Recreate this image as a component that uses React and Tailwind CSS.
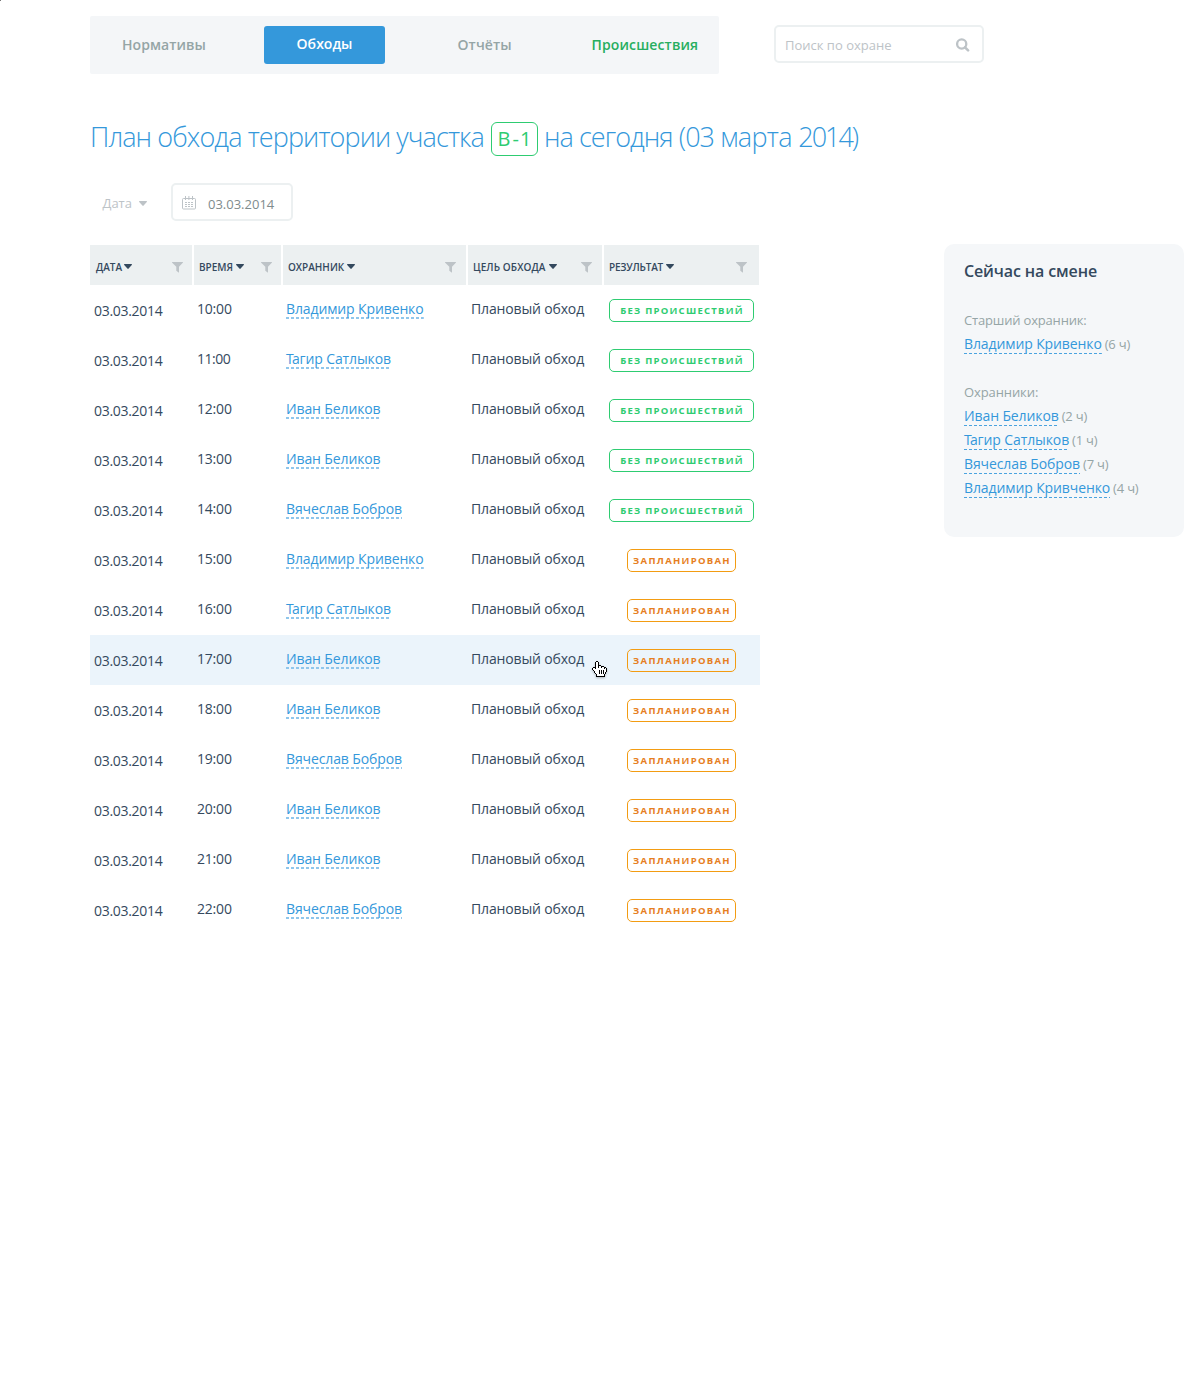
import React from "react";

const rows = [
  ["10:00", "Владимир Кривенко", true],
  ["11:00", "Тагир Сатлыков", true],
  ["12:00", "Иван Беликов", true],
  ["13:00", "Иван Беликов", true],
  ["14:00", "Вячеслав Бобров", true],
  ["15:00", "Владимир Кривенко", false],
  ["16:00", "Тагир Сатлыков", false],
  ["17:00", "Иван Беликов", false],
  ["18:00", "Иван Беликов", false],
  ["19:00", "Вячеслав Бобров", false],
  ["20:00", "Иван Беликов", false],
  ["21:00", "Иван Беликов", false],
  ["22:00", "Вячеслав Бобров", false],
];

const columns = [
  { label: "Дата", pad: "pl-[6px] pr-[9px]", gap: "ml-0.5" },
  { label: "Время", pad: "pl-[5px] pr-[9.5px]", gap: "ml-[3px]" },
  { label: "Охранник", pad: "pl-[5px] pr-[10.5px]", gap: "ml-[3px]" },
  { label: "Цель обхода", pad: "pl-[5px] pr-[10.5px] tracking-[0.1px]", gap: "ml-[3px]" },
  { label: "Результат", pad: "pl-[5px] pr-[12.5px] mr-px tracking-[-0.2px]", gap: "ml-[3px]" },
];

const onDuty = [
  ["Иван Беликов", 2],
  ["Тагир Сатлыков", 1],
  ["Вячеслав Бобров", 7],
  ["Владимир Кривченко", 4],
];

/* "X" is outline, "o" is fill. */
const HAND = [
  "....XX.........",
  "...XooX........",
  "...XooX........",
  "...XooX........",
  "...XooXXX......",
  "...XooXooXXX...",
  ".XXXooXooXooXX.",
  "XooXooooooooXoX",
  "XoooooooooooooX",
  ".XoooooXoXoXooX",
  "..XooooXoXoXooX",
  "..XooooXoXoXoX.",
  "...XoooXoXoXoX.",
  "....XoooooooX..",
  "....XoooooooX..",
  "....XXXXXXXXX..",
];

const GRID = "grid grid-cols-[102px_87px_183px_134px_156px] gap-x-0.5";

function Caret({ className }) {
  return (
    <svg width="8" height="5" viewBox="0 0 8 5" className={className} fill="currentColor">
      <path d="M.5 0h7c.5 0 .6.5.3.9L4.600 4.600c-.3.4-.8.4-1.200 0L.2.900C-.1.500 0 0 .5 0z" />
    </svg>
  );
}

function Funnel() {
  return (
    <svg width="11" height="11" viewBox="0 0 11 11" className="ml-auto mt-px text-[#bdc3c7]" fill="currentColor">
      <path d="M.4 0h10.200c.4 0 .5.5.2.800L7 4.700v6.100L4.300 8.700v-4L.2.800C-.1.500 0 0 .4 0z" />
    </svg>
  );
}

function CalendarIcon() {
  return (
    <svg width="14" height="14" viewBox="0 0 14 14" className="mt-px text-[#bdc3c7]" fill="none" stroke="currentColor">
      <rect x=".5" y="2.500" width="13" height="10.500" rx="1" />
      <path d="M3.500 0v4M6.900 0v4M10.500 0v4" />
      <path d="M3 6.500h8M3 8.500h8M3 10.500h8" strokeDasharray="2 1" />
    </svg>
  );
}

function SearchIcon() {
  return (
    <svg width="14" height="14" viewBox="0 0 14 14" className="mt-px text-[#bdc3c7]" fill="none" stroke="currentColor">
      <circle cx="5.700" cy="6" r="4.600" strokeWidth="2.300" />
      <path d="M9 9.300l3.100 3.100" strokeWidth="2.500" strokeLinecap="round" />
    </svg>
  );
}

function HandCursor() {
  return (
    <svg width="15" height="16" viewBox="0 0 15 16" className="absolute left-[502px] top-[416px] drop-shadow-[0_1px_1px_rgba(0,0,0,0.25)]" shapeRendering="crispEdges">
      {HAND.flatMap((line, y) =>
        [...line].map((c, x) =>
          c === "." ? null : <rect key={`${x}-${y}`} x={x} y={y} width="1" height="1" fill={c === "X" ? "#000" : "#fff"} />
        )
      )}
    </svg>
  );
}

/* Pulls the vowel under the crossbar of a leading "Т". */
function Name({ children }) {
  if (!children.startsWith("Та")) return children;
  return (
    <>
      <span className="tracking-[-1.8px]">Т</span>
      {children.slice(1)}
    </>
  );
}

function RowLink({ children }) {
  return (
    <a className="h-[19px] bg-[repeating-linear-gradient(90deg,#8fc6ec_0_3px,transparent_3px_5px)] bg-[length:100%_2px] bg-bottom bg-no-repeat text-[14px] leading-[18px] tracking-[-0.12px] text-[#3498db]">
      <Name>{children}</Name>
    </a>
  );
}

function DutyLine({ name, hours }) {
  return (
    <div className="flex h-6 items-start gap-[3px] whitespace-nowrap">
      <a className="h-5 bg-[repeating-linear-gradient(90deg,#4aa3df_0_3px,transparent_3px_5px)] bg-[length:100%_1px] bg-bottom bg-no-repeat text-[14px] leading-[19px] tracking-[-0.11px] text-[#3498db]">
        <Name>{name}</Name>
      </a>
      <span className="text-[13px] leading-5 tracking-[-0.2px] text-[#95a5a6]">({hours} ч)</span>
    </div>
  );
}

export default function App() {
  return (
    <div className="relative min-h-[1400px] w-[1200px] bg-white pl-[90px] pt-4 text-[#34495e] [font-family:'Open_Sans',sans-serif]">
      <span className="absolute left-0 top-0 size-px bg-[#777]" />
      <header className="flex items-start">
        <nav className="flex h-[58px] w-[629px] items-start rounded-[2px] bg-[#f4f6f8] pt-[10px] text-[14px] font-semibold leading-[38px] text-[#95a5a6]">
          <a className="w-[174px] pl-8 tracking-[0.05px]">Нормативы</a>
          <a className="h-[38px] w-[121px] rounded-[3px] bg-[#3498db] text-center leading-9 text-white">Обходы</a>
          <a className="w-[206px] pl-[72.5px] tracking-[0.1px]">Отчёты</a>
          <a className="pl-[0.5px] tracking-[0.13px] text-[#27ae60]">Происшествия</a>
        </nav>
        <div className="ml-[55px] mt-[9px] flex h-[38px] w-[210px] items-center justify-between rounded-[5px] border-2 border-[#ecf0f1] pl-[9px] pr-[12px]">
          <span className="pt-0.5 text-[13px] leading-5 text-[#bdc3c7]">Поиск по охране</span>
          <SearchIcon />
        </div>
      </header>

      <h1 className="mt-[44px] flex h-[38px] whitespace-nowrap text-[27px] font-light leading-[38px] text-[#3498db]">
        <span className="w-[394px] tracking-[-0.9px]">План обхода территории участка</span>
        <span className="ml-[7px] mr-[6px] mt-[4px] h-[34px] w-[47px] rounded-[6px] border border-[#2ecc71] pl-px text-center text-[20px] font-normal leading-8 tracking-[1px] text-[#2ecc71]">
          <span className="tracking-[2px]">В</span>-1
        </span>
        <span className="tracking-[-0.95px]">
          на сегодня (03 <span className="tracking-[-0.65px]">марта </span>
          <span className="tracking-[-2px]">2014)</span>
        </span>
      </h1>

      <div className="mt-[27px] flex h-[38px] items-center pl-[12.5px] text-[13px]">
        <span className="pt-0.5 leading-5 text-[#bdc3c7]">Дата</span>
        <Caret className="ml-[7.5px] mt-[3px] text-[#bdc3c7]" />
        <div className="ml-[23.5px] flex h-[38px] w-[122px] items-center rounded-[5px] border-2 border-[#ecf0f1] pl-[9px]">
          <CalendarIcon />
          <span className="ml-[12px] pt-1 leading-5 text-[#7f8c8d]">03.03.2014</span>
        </div>
      </div>

      <main className="mt-[23px] flex items-start">
        <section className="relative mt-px w-[670px]">
          <div className={`${GRID} h-10`}>
            {columns.map((c) => (
              <div
                key={c.label}
                className={`flex items-center bg-[#ecf0f1] pt-[3px] text-[10px] font-semibold uppercase leading-4 text-[#34495e] ${c.pad}`}
              >
                <span className="whitespace-nowrap">{c.label}</span>
                <Caret className={c.gap} />
                <Funnel />
              </div>
            ))}
          </div>
          {rows.map(([time, name, done]) => (
            <div key={time} className={`${GRID} h-[50px] text-[14px] leading-[18px] ${time === "17:00" ? "bg-[#ebf4fb]" : ""}`}>
              <div className="pl-1 pt-[17px] tracking-[-0.3px]">03.03.2014</div>
              <div className={`pl-[3px] pt-[15px] ${time === "11:00" ? "tracking-[-0.5px]" : "tracking-[-0.2px]"}`}>{time}</div>
              <div className="flex items-start whitespace-nowrap pl-[3px] pt-[15px]">
                <RowLink>{name}</RowLink>
              </div>
              <div className="whitespace-nowrap pl-[3px] pt-[15px] tracking-[-0.15px]">Плановый обход</div>
              <div className="flex items-start justify-center pr-[2px] pt-[14px]">
                {done ? (
                  <span className="h-[23px] w-[145px] whitespace-nowrap rounded-[5px] border border-[#2ecc71] pl-[2px] text-center text-[9.5px] font-bold leading-[22px] tracking-[1.25px] text-[#2ecc71]">
                    БЕЗ ПРОИСШЕСТВИЙ
                  </span>
                ) : (
                  <span className="h-[23px] w-[109px] whitespace-nowrap rounded-[5px] border border-[#f39c12] pl-[2px] text-center text-[9.5px] font-bold leading-[22px] tracking-[1.3px] text-[#e67e22]">
                    ЗАПЛАНИРОВАН
                  </span>
                )}
              </div>
            </div>
          ))}
          <HandCursor />
        </section>

        <aside className="ml-[184px] h-[293px] w-[240px] rounded-[10px] bg-[#f5f7f9] pl-5 pt-[17px]">
          <h2 className="text-[16px] font-semibold leading-5 tracking-[-0.12px] text-[#34495e]">Сейчас на смене</h2>
          <p className="mt-[29px] h-6 text-[13px] leading-5 tracking-[-0.18px] text-[#95a5a6]">Старший охранник:</p>
          <DutyLine name="Владимир Кривенко" hours={6} />
          <p className="mt-6 h-6 text-[13px] leading-5 tracking-[-0.1px] text-[#95a5a6]">Охранники:</p>
          {onDuty.map(([name, hours]) => (
            <DutyLine key={name} name={name} hours={hours} />
          ))}
        </aside>
      </main>
    </div>
  );
}
